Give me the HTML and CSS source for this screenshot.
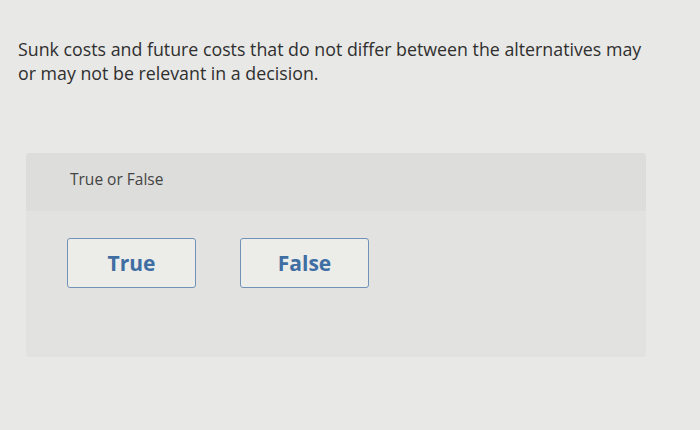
FILE: index.html
```html
<!DOCTYPE html>
<html lang="en">
<head>
    <meta charset="UTF-8">
    <title>True or False</title>
    <link rel="stylesheet" href="styles.css">
</head>
<body>
    <div class="question">
        <p>Sunk costs and future costs that do not differ between the alternatives may or may not be relevant in a decision.</p>
    </div>

    <div class="answer-panel">
        <div class="panel-header">True or False</div>
        <div class="panel-body">
            <button class="choice-btn">True</button>
            <button class="choice-btn">False</button>
        </div>
    </div>
</body>
</html>
```

FILE: styles.css
```css
html, body {
    margin: 0;
    padding: 0;
    height: 100%;
}

body {
    font-family: "Open Sans", "Lato", sans-serif;
    background-color: #e8e8e6;
    color: #2f2f2f;
    overflow: hidden;
}

.question {
    padding: 37px 40px 0 18px;
}

.question p {
    margin: 0;
    font-size: 17.8px;
    line-height: 24px;
    width: 636px;
}

.answer-panel {
    margin: 68px 0 0 26px;
    width: 620px;
    border-radius: 3px;
    overflow: hidden;
}

.panel-header {
    background-color: #dddddb;
    height: 58px;
    padding-left: 44px;
    box-sizing: border-box;
    font-size: 15.5px;
    line-height: 52px;
    color: #444;
}

.panel-body {
    background-color: #e2e2e0;
    height: 146px;
    padding: 27px 0 0 41px;
    box-sizing: border-box;
    display: flex;
    gap: 44px;
}

.choice-btn {
    width: 129px;
    height: 50px;
    background-color: #ecece9;
    border: 1.5px solid #7092b8;
    border-radius: 3px;
    font-family: inherit;
    font-size: 21px;
    font-weight: bold;
    color: #3f6ea3;
    cursor: pointer;
}
```
